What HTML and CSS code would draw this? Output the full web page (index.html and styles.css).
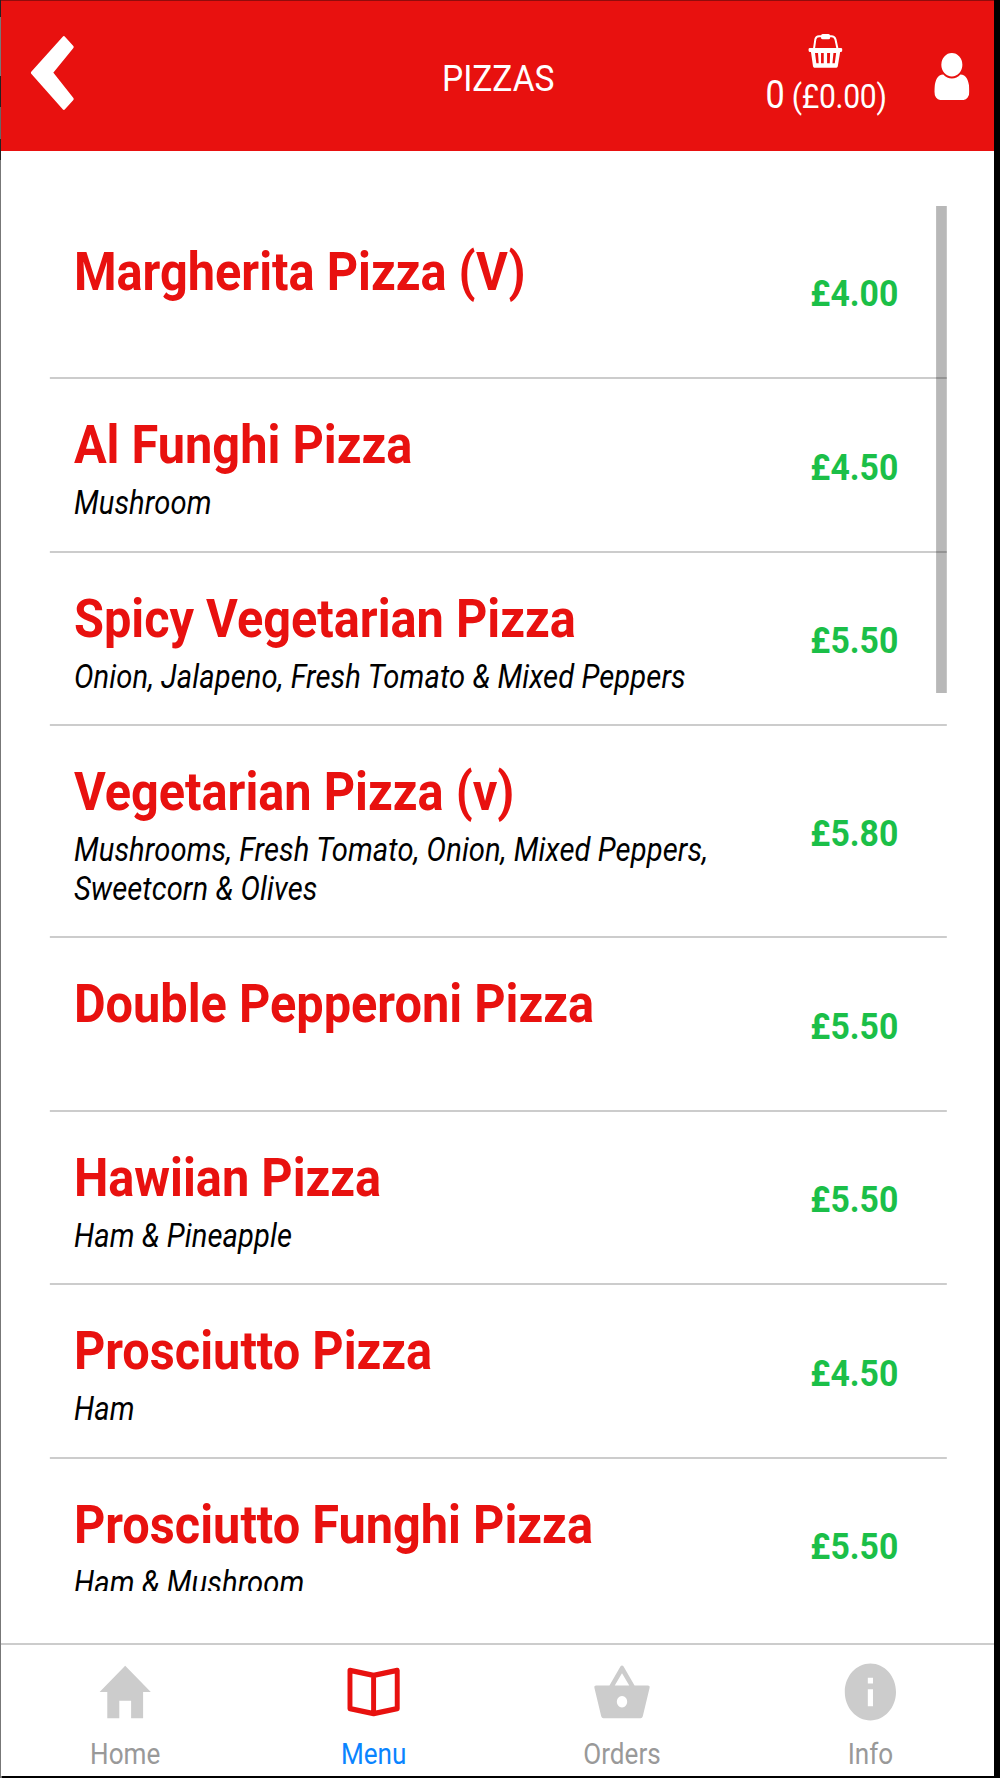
FILE: index.html
```
<!DOCTYPE html>
<html lang="en">
<head>
    <meta charset="UTF-8">
    <title>Pizzas</title>
    <meta name="viewport" content="width=device-width, initial-scale=1">
    <link rel="stylesheet" href="styles.css">
</head>
<body>
<div class="screen">
<div class="app">
    <header class="header">
        <svg class="back" viewBox="0 0 129 222" preserveAspectRatio="none"><path d="M99 5 L124 33 L62 110 L124 189 L99 217 L5 110 Z"/></svg>
        <h1>PIZZAS</h1>
        <div class="header-right">
            <div class="basket">
                <svg class="basket-icon" viewBox="0 0 102 102" preserveAspectRatio="none">
                    <path d="M17 44 L21 16 Q23 7 32 7 H69 Q78 7 81 16 L87 44" fill="none" stroke="#fff" stroke-width="6"/>
                    <rect x="38" y="0" width="27" height="16" rx="5"/>
                    <path fill-rule="evenodd" d="M4 42 H98 Q102 42 102 47 Q102 53 98 54 H95 L88 97 Q87 101 84 101 H18 Q15 101 14 97 L8 54 H4 Q0 53 0 47 Q0 42 4 42 Z M20 57 L24 88 H31 L29 57 Z M38 57 V88 H46 V57 Z M56 57 V88 H64 L65 57 Z M75 57 L72 88 H79 L83 57 Z"/>
                </svg>
                <div class="total">0<span> (£0.00)</span></div>
            </div>
            <svg class="user" viewBox="256 128 1280 1536"><path d="M1536 1399q0 109-62.5 187t-150.5 78h-854q-88 0-150.5-78t-62.5-187q0-85 8.5-160.5t31.5-152 58.5-131 94-89 134.5-34.5q131 128 313 128t313-128q76 0 134.5 34.5t94 89 58.5 131 31.5 152 8.5 160.5zm-256-887q0 159-112.5 271.5t-271.5 112.5-271.5-112.5-112.5-271.5 112.5-271.5 271.5-112.5 271.5 112.5 112.5 271.5z"/></svg>
        </div>
    </header>
    <main class="list">
        <div class="item">
            <div class="info"><h2>Margherita Pizza (V)</h2><p></p></div>
            <div class="price">£4.00</div>
        </div>
        <div class="item">
            <div class="info"><h2>Al Funghi Pizza</h2><p>Mushroom</p></div>
            <div class="price">£4.50</div>
        </div>
        <div class="item">
            <div class="info"><h2>Spicy Vegetarian Pizza</h2><p>Onion, Jalapeno, Fresh Tomato &amp; Mixed Peppers</p></div>
            <div class="price">£5.50</div>
        </div>
        <div class="item">
            <div class="info"><h2>Vegetarian Pizza (v)</h2><p>Mushrooms, Fresh Tomato, Onion, Mixed Peppers, Sweetcorn &amp; Olives</p></div>
            <div class="price">£5.80</div>
        </div>
        <div class="item">
            <div class="info"><h2>Double Pepperoni Pizza</h2><p></p></div>
            <div class="price">£5.50</div>
        </div>
        <div class="item">
            <div class="info"><h2>Hawiian Pizza</h2><p>Ham &amp; Pineapple</p></div>
            <div class="price">£5.50</div>
        </div>
        <div class="item">
            <div class="info"><h2>Prosciutto Pizza</h2><p>Ham</p></div>
            <div class="price">£4.50</div>
        </div>
        <div class="item">
            <div class="info"><h2>Prosciutto Funghi Pizza</h2><p>Ham &amp; Mushroom</p></div>
            <div class="price">£5.50</div>
        </div>
        <div class="scrollbar"></div>
    </main>
    <nav class="tabs">
        <div class="tab">
            <svg viewBox="0 0 512 512"><path d="M208 448V320h96v128h97.6V256H464L256 64 48 256h62.4v192z"/></svg>
            <span>Home</span>
        </div>
        <div class="tab active">
            <svg viewBox="0 0 512 512"><path d="M64 98 L256 134 L448 98 V378 L256 414 L64 378 Z M256 134 V414"/></svg>
            <span>Menu</span>
        </div>
        <div class="tab">
            <svg viewBox="0 0 512 512"><path fill-rule="evenodd" d="M154 208 L243 70 Q256 54 269 70 L358 208 H466 Q484 208 480 226 L425 434 Q420 448 408 448 H104 Q92 448 87 434 L32 226 Q28 208 46 208 Z M197 208 H315 L256 118 Z M256 285 a42 42 0 1 0 0.1 0 Z"/></svg>
            <span>Orders</span>
        </div>
        <div class="tab">
            <svg viewBox="0 0 512 512"><path d="M256 48C141.2 48 48 141.2 48 256s93.2 208 208 208 208-93.2 208-208S370.8 48 256 48zm21 312h-42V235h42v125zm0-166h-42v-42h42v42z"/></svg>
            <span>Info</span>
        </div>
    </nav>
</div>
</div>
</body>
</html>
```
FILE: styles.css
```
* { box-sizing: border-box; }
html { background: #000; }
body {
    margin: 0;
    height: 1778px;
    padding-left: 1px;
    overflow: hidden;
    font-family: Roboto, sans-serif;
    background: linear-gradient(#222 17px, #777 17px, #777 76px, #222 76px, #222 107px, #666 107px, #666 139px, #222 139px, #222 160px, #777 160px) 0 0 / 2px 100% no-repeat #000;
}
.screen { width: 993px; height: 1775.5px; overflow: hidden; }
/* laid out wide, then narrowed to the screen */
.app {
    width: 1104px;
    height: 1775.5px;
    display: flex;
    flex-direction: column;
    background: #fff;
    transform: scaleX(.9);
    transform-origin: 0 0;
}
.header {
    height: 150.5px;
    display: grid;
    grid-template-columns: 1fr auto 1fr;
    align-items: center;
    padding: 0 28px 0 33px;
    background: #e8110f;
    border-top: 1.5px solid #900c0c;
    color: #fff;
    fill: #fff;
}
.back { width: 48px; height: 74px; margin-top: -5px; stroke: #fff; stroke-width: 9; stroke-linejoin: round; }
h1 { margin: 5px 4px 0 0; font-size: 37.3px; font-weight: 400; line-height: 44px; }
.header-right { display: flex; justify-content: flex-end; align-items: center; gap: 53px; }
.basket { display: flex; flex-direction: column; align-items: center; }
.basket-icon { width: 38px; height: 34px; margin: 2px 2px 0 0; }
.total { margin-top: 4px; font-size: 38px; line-height: 46px; letter-spacing: -.3px; white-space: nowrap; }
.total span { font-size: 33.4px; }
.user { width: 39px; height: 47px; margin-top: 2px; }
.list {
    position: relative;
    height: 1385px;
    margin: 55px 53px 0 54px;
    overflow: hidden;
}
.item {
    display: flex;
    align-items: center;
    justify-content: space-between;
    min-height: 173.5px;
    padding: 28px 54px 27.4px 27px;
    border-bottom: 2px solid #ccc;
}
.info { flex: none; width: 730px; }
h2 { margin: 0; font-size: 54.1px; line-height: 76px; font-weight: 700; color: #e8110f; white-space: nowrap; }
p { margin: 1px 0 0; min-height: 39px; font-size: 32.4px; line-height: 39px; font-style: italic; color: #000; letter-spacing: .12px; }
.price { margin-top: 3px; font-size: 37.5px; font-weight: 700; color: #1bbf48; }
.scrollbar {
    position: absolute;
    top: 0;
    right: 0;
    width: 12px;
    height: 487px;
    background: rgba(0, 0, 0, .28);
}
.tabs {
    flex: 1;
    display: flex;
    margin-top: 52.5px;
    border-top: 2px solid #ccc;
}
.tab {
    flex: 1;
    display: flex;
    flex-direction: column;
    align-items: center;
    padding-top: 12px;
    font-size: 29px;
    line-height: 34px;
    color: #999;
}
.tab svg { width: 70px; height: 70px; fill: #ccc; }
.tab span { margin-top: 9.5px; }
.tab.active { color: #0a84ff; }
.tab.active svg { fill: none; stroke: #e8110f; stroke-width: 40; stroke-linejoin: round; }
```
